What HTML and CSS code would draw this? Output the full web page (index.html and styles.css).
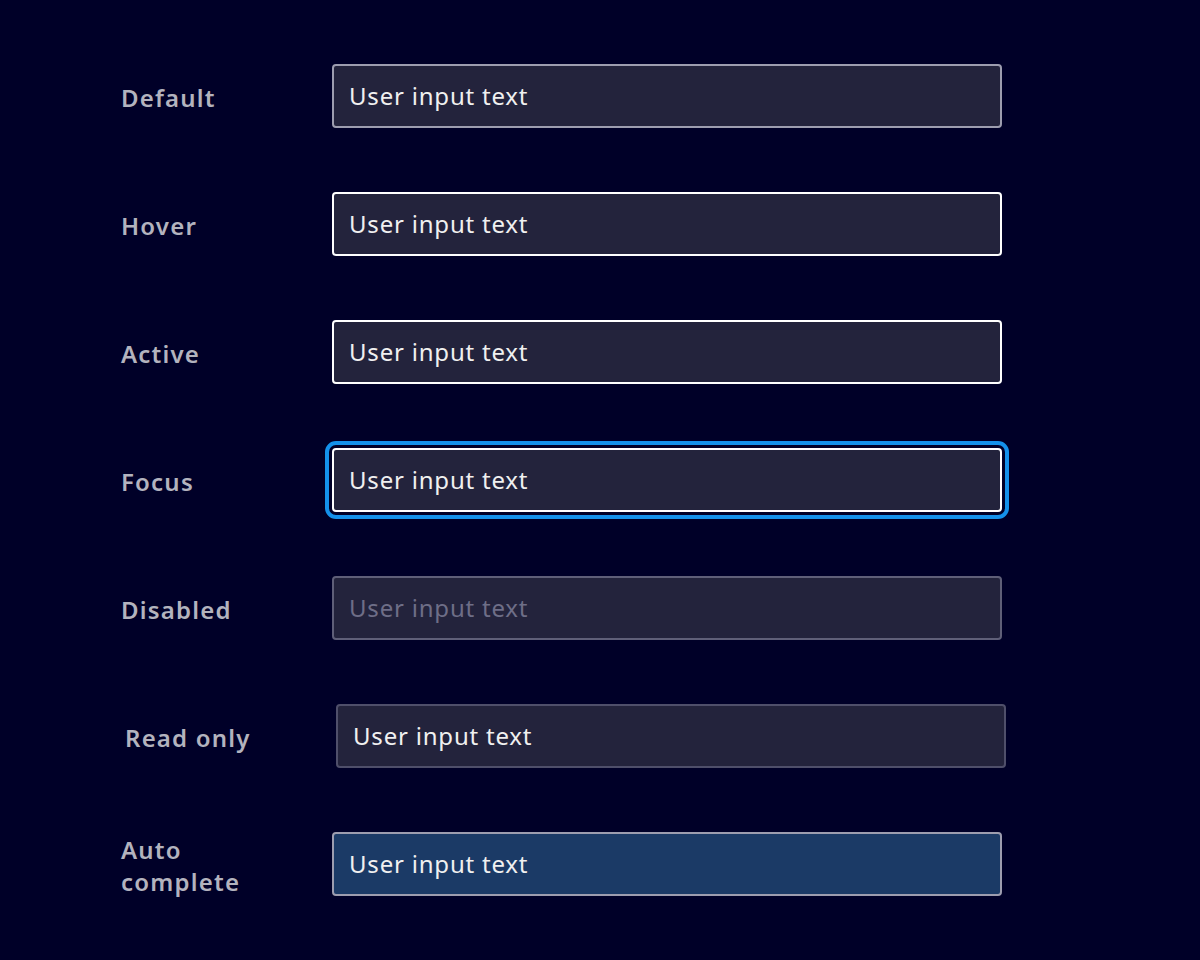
FILE: index.html
```html
<!DOCTYPE html>
<html lang="en">
<head>
<meta charset="utf-8">
<title>Input states</title>
<link rel="stylesheet" href="styles.css">
</head>
<body>
<main class="states">
  <div class="row">
    <div class="label">Default</div>
    <div class="field">User input text</div>
  </div>
  <div class="row">
    <div class="label">Hover</div>
    <div class="field field-hover">User input text</div>
  </div>
  <div class="row">
    <div class="label">Active</div>
    <div class="field field-active">User input text</div>
  </div>
  <div class="row">
    <div class="label">Focus</div>
    <div class="field field-focus">User input text</div>
  </div>
  <div class="row">
    <div class="label">Disabled</div>
    <div class="field field-disabled">User input text</div>
  </div>
  <div class="row row-shift">
    <div class="label">Read only</div>
    <div class="field field-readonly">User input text</div>
  </div>
  <div class="row">
    <div class="label">Auto complete</div>
    <div class="field field-auto">User input text</div>
  </div>
</main>
</body>
</html>
```
FILE: styles.css
```css
html, body {
  margin: 0;
  padding: 0;
  background: #000028;
}
body {
  width: 1200px;
  height: 960px;
  font-family: "Noto Sans", "Open Sans", sans-serif;
}
.states {
  display: flex;
  flex-direction: column;
  gap: 64px;
  padding: 64px 0 0 121px;
}
.row {
  display: grid;
  grid-template-columns: 140px 670px;
  grid-template-rows: 64px;
  column-gap: 71px;
  align-items: center;
  height: 64px;
}
.row-shift {
  margin-left: 4px;
}
.label {
  margin-top: 4px;
  font-size: 24px;
  font-weight: 600;
  line-height: 32px;
  letter-spacing: 1.2px;
  color: #b3b3be;
}
.field {
  box-sizing: border-box;
  height: 64px;
  display: flex;
  align-items: center;
  padding: 0 15px;
  border: 2px solid #9d9daf;
  border-radius: 4px;
  background: #23233c;
  color: #f0f0f0;
  font-size: 24px;
  line-height: 32px;
  letter-spacing: 0.8px;
}
.field-hover,
.field-active {
  border-color: #ffffff;
}
.field-focus {
  border-color: #ffffff;
  outline: 4px solid #1491eb;
  outline-offset: 3px;
}
.field-disabled {
  border-color: #5f5f78;
  color: #6e6e87;
}
.field-readonly {
  border-color: #4f4f6a;
}
.field-auto {
  background: #1b3a66;
}
```
